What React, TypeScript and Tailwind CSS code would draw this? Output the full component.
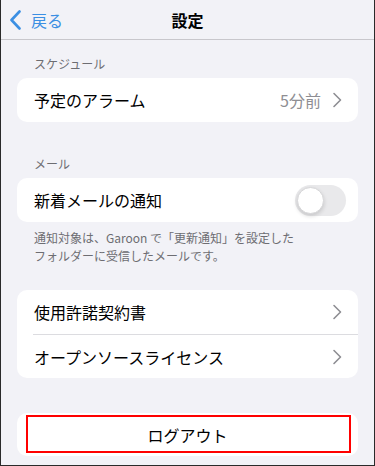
import React from 'react';

const font = { fontFamily: '"Noto Sans CJK JP", "Noto Sans", sans-serif' };

const Chevron: React.FC = () => (
  <svg width="10" height="16" viewBox="0 0 10 16" fill="none" className="shrink-0">
    <polyline points="2,1.5 8.5,8 2,14.5" stroke="#8e8e93" strokeWidth="1.6" strokeLinecap="round" strokeLinejoin="round" />
  </svg>
);

const SectionLabel: React.FC<{ text: string; className?: string }> = ({ text, className }) => (
  <div className={`px-[17px] pb-[6px] text-[12px] leading-[16px] text-[#6d6d72] ${className ?? ''}`}>{text}</div>
);

export default function App() {
  return (
    <div
      style={font}
      className="w-[375px] h-[466px] overflow-hidden bg-[#f2f2f7] border-l border-r border-b border-[#2a2a2a] flex flex-col"
    >
      <header className="relative h-[40px] shrink-0 border-b border-[#c8c7cc] flex items-center justify-center">
        <button className="absolute left-[8px] top-0 h-full flex items-center gap-[9px] text-[#3b8fe3]">
          <svg width="13" height="20" viewBox="0 0 13 20" fill="none">
            <polyline points="10.5,1.5 2.5,10 10.5,18.5" stroke="#3b8fe3" strokeWidth="2.6" strokeLinecap="round" strokeLinejoin="round" />
          </svg>
          <span className="text-[16px] leading-none">戻る</span>
        </button>
        <h1 className="text-[16px] font-bold text-black leading-none">設定</h1>
      </header>

      <main className="px-4">
        <SectionLabel text="スケジュール" className="pt-[16px]" />
        <div className="bg-white rounded-[10px] h-[44px] flex items-center pl-[17px] pr-[16px]">
          <span className="flex-1 text-[16px] text-black">予定のアラーム</span>
          <span className="text-[16px] text-[#8e8e93] mr-[11px]">5分前</span>
          <Chevron />
        </div>

        <SectionLabel text="メール" className="pt-[34px]" />
        <div className="bg-white rounded-[10px] h-[44px] flex items-center pl-[17px] pr-[12px]">
          <span className="flex-1 text-[16px] text-black">新着メールの通知</span>
          <div className="w-[51px] h-[31px] rounded-full bg-[#e9e9eb] p-[2px] flex items-center">
            <div className="w-[27px] h-[27px] rounded-full bg-white border border-[#d6d6d8] shadow-[0_2px_4px_rgba(0,0,0,0.15)]" />
          </div>
        </div>
        <p className="px-[17px] pt-[7px] text-[12px] leading-[18px] text-[#6d6d72]">
          通知対象は、Garoon で「更新通知」を設定した
          <br />
          フォルダーに受信したメールです。
        </p>

        <div className="mt-[25px] bg-white rounded-[10px]">
          <div className="h-[44px] flex items-center pl-[17px] pr-[16px]">
            <span className="flex-1 text-[16px] text-black">使用許諾契約書</span>
            <Chevron />
          </div>
          <div className="ml-[16px] h-px bg-[#dcdce0]" />
          <div className="h-[43px] flex items-center pl-[17px] pr-[16px]">
            <span className="flex-1 text-[16px] text-black">オープンソースライセンス</span>
            <Chevron />
          </div>
        </div>

        <div className="mt-[35px] bg-white rounded-[10px] h-[43px] relative flex items-center justify-center">
          <span className="text-[16px] text-black">ログアウト</span>
          <div className="absolute left-[9px] right-[7px] top-[2px] bottom-[3px] border-2 border-[#ff0000]" />
        </div>
      </main>
    </div>
  );
}
